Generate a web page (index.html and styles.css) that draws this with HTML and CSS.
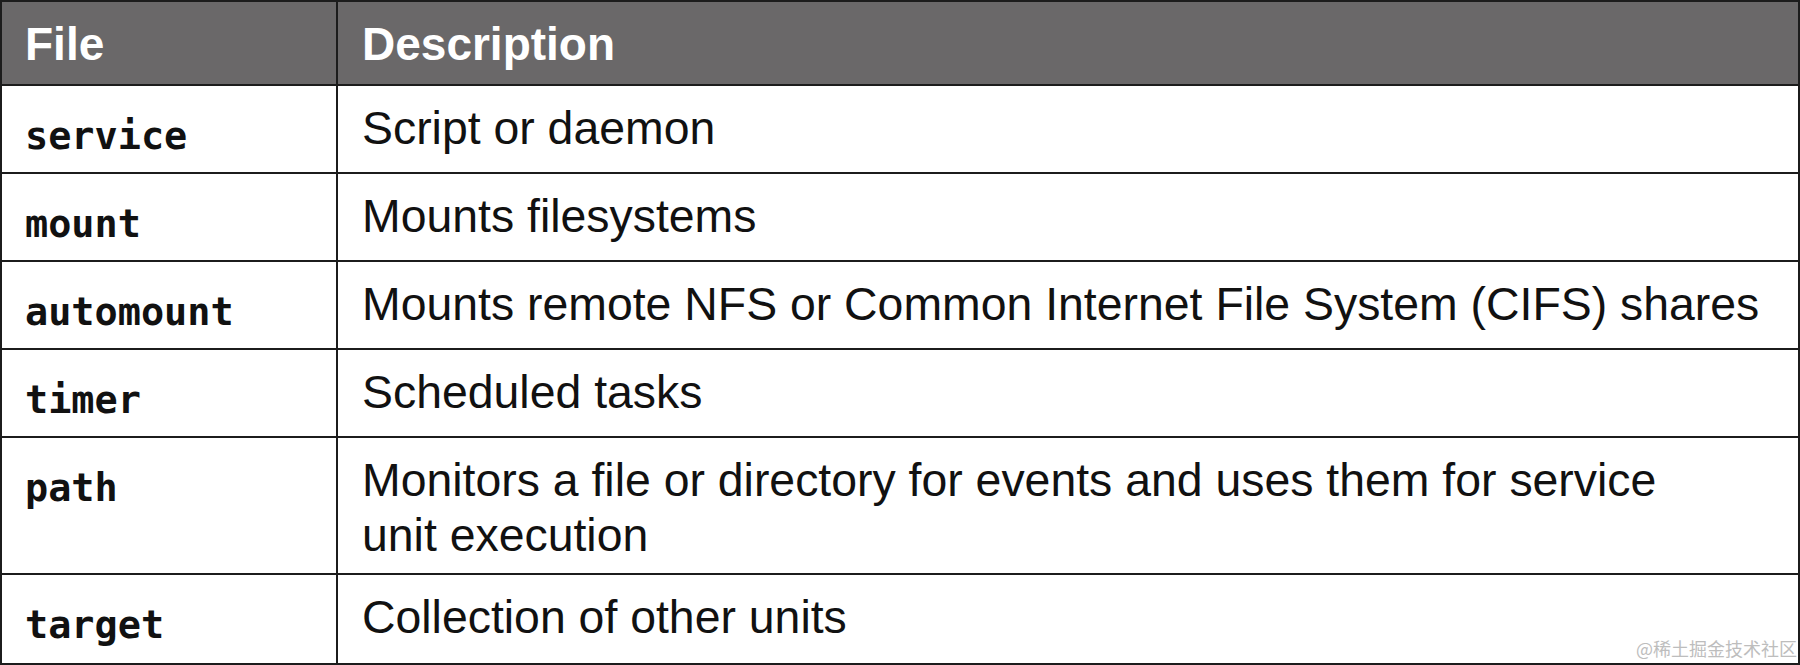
FILE: index.html
```html
<!DOCTYPE html>
<html>
<head>
<meta charset="utf-8">
<link rel="stylesheet" href="styles.css">
</head>
<body>
<div class="page">
  <div class="table">
    <div class="cell head c1">File</div>
    <div class="cell head c2">Description</div>

    <div class="cell c1 mono">service</div>
    <div class="cell c2">Script or daemon</div>

    <div class="cell c1 mono">mount</div>
    <div class="cell c2">Mounts filesystems</div>

    <div class="cell c1 mono">automount</div>
    <div class="cell c2">Mounts remote NFS or Common Internet File System (CIFS) shares</div>

    <div class="cell c1 mono">timer</div>
    <div class="cell c2">Scheduled tasks</div>

    <div class="cell c1 mono tall">path</div>
    <div class="cell c2 tall">Monitors a file or directory for events and uses them for service<br>unit execution</div>

    <div class="cell c1 mono last">target</div>
    <div class="cell c2 last">Collection of other units</div>
  </div>
  <div class="watermark">@稀土掘金技术社区</div>
</div>
</body>
</html>
```

FILE: styles.css
```css
html, body {
  margin: 0;
  padding: 0;
  background: #ffffff;
}

.page {
  position: relative;
  width: 1800px;
  height: 665px;
  overflow: hidden;
}

.table {
  display: grid;
  grid-template-columns: 336px 1fr;
  grid-template-rows: 84px 88px 88px 88px 88px 137px 88px;
  border: 2px solid #1c1c1c;
  box-sizing: border-box;
  width: 1800px;
  height: 665px;
  font-family: "Liberation Sans", Arial, sans-serif;
  font-size: 46.4px;
  line-height: 55px;
  color: #111111;
}

.cell {
  box-sizing: border-box;
  padding: 15px 20px 0 23px;
  border-bottom: 2px solid #1c1c1c;
  white-space: nowrap;
}

.c1 {
  border-right: 2px solid #1c1c1c;
}

.c2 {
  padding-left: 24px;
}

.last {
  border-bottom: none;
}

.head {
  background: #6a6869;
  color: #ffffff;
  font-weight: bold;
  font-size: 46px;
}

.mono {
  font-family: "DejaVu Sans Mono", "Liberation Mono", monospace;
  font-weight: bold;
  font-size: 38.5px;
  padding-top: 22px;
  padding-left: 23px;
}

.watermark {
  position: absolute;
  right: 3px;
  bottom: 6px;
  font-family: "Noto Sans CJK SC", "DejaVu Sans", sans-serif;
  font-size: 18px;
  line-height: 22px;
  color: #bdbdbd;
}
```
